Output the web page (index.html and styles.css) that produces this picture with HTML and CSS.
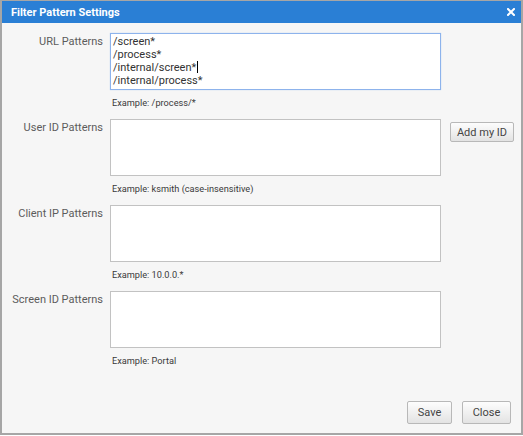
FILE: index.html
```html
<!DOCTYPE html>
<html>
<head>
<meta charset="utf-8">
<link rel="stylesheet" href="styles.css">
</head>
<body>
<div class="dialog">
  <div class="titlebar">
    <span class="title">Filter Pattern Settings</span>
    <svg class="close-x" width="8" height="8" viewBox="0 0 8 8"><path d="M1 1L7 7M7 1L1 7" stroke="#fff" stroke-width="2" stroke-linecap="square"/></svg>
  </div>
  <div class="content">
    <div class="row">
      <div class="label">URL Patterns</div>
      <div class="field">
        <div class="area focused">/screen*<br>/process*<br>/internal/screen*<span class="caret"></span><br>/internal/process*</div>
        <div class="hint">Example: /process/*</div>
      </div>
    </div>
    <div class="row">
      <div class="label">User ID Patterns</div>
      <div class="field">
        <div class="area"></div>
        <div class="hint">Example: ksmith (case-insensitive)</div>
      </div>
      <button class="btn btn-side">Add my ID</button>
    </div>
    <div class="row">
      <div class="label">Client IP Patterns</div>
      <div class="field">
        <div class="area"></div>
        <div class="hint">Example: 10.0.0.*</div>
      </div>
    </div>
    <div class="row">
      <div class="label">Screen ID Patterns</div>
      <div class="field">
        <div class="area"></div>
        <div class="hint">Example: Portal</div>
      </div>
    </div>
  </div>
  <div class="footer">
    <button class="btn btn-foot btn-save">Save</button>
    <button class="btn btn-foot btn-close">Close</button>
  </div>
</div>
</body>
</html>
```

FILE: styles.css
```css
html, body {
  margin: 0;
  padding: 0;
  background: #ffffff;
}
body {
  font-family: Roboto, "Liberation Sans", Arial, sans-serif;
}
.dialog {
  width: 523px;
  height: 435px;
  box-sizing: border-box;
  border: 2px solid #a6a6a6;
  border-top-width: 1px;
  background: #f6f6f6;
  display: flex;
  flex-direction: column;
}
.titlebar {
  height: 22px;
  background: #2a7fd5;
  display: flex;
  align-items: center;
  justify-content: space-between;
  padding: 0 6px 0 9px;
  flex: none;
}
.title {
  color: #ffffff;
  font-weight: 700;
  font-size: 11px;
  line-height: 13px;
}
.close-x {
  display: block;
}
.content {
  padding-top: 10px;
  flex: 1;
}
.row {
  display: flex;
  align-items: flex-start;
  height: 86px;
}
.label {
  width: 101px;
  text-align: right;
  font-size: 11px;
  line-height: 13px;
  color: #5c5c5c;
  padding-top: 2px;
  flex: none;
}
.field {
  margin-left: 7px;
  width: 331px;
  flex: none;
}
.area {
  box-sizing: border-box;
  height: 57px;
  background: #ffffff;
  border: 1px solid #c2c2c2;
  padding: 2px 2px;
  font-size: 11px;
  line-height: 12.65px;
  color: #333333;
}
.area.focused {
  border-color: #8db3ec;
  box-shadow: 0 0 1px 0 #b4cdf3;
}
.caret {
  display: inline-block;
  width: 1px;
  height: 12px;
  background: #000000;
  vertical-align: -2px;
  margin-left: 1px;
}
.hint {
  margin-top: 7px;
  padding-left: 2px;
  font-size: 9.2px;
  line-height: 11px;
  color: #3a3a3a;
}
.btn {
  font-family: Roboto, "Liberation Sans", Arial, sans-serif;
  font-size: 11px;
  color: #444444;
  background: linear-gradient(#fdfdfd, #e3e3e3);
  border: 1px solid #b8b8b8;
  border-radius: 2px;
  padding: 0;
  box-sizing: border-box;
}
.btn-side {
  margin-left: 9px;
  margin-top: 3px;
  width: 64px;
  height: 20px;
}
.footer {
  display: flex;
  justify-content: flex-end;
  gap: 10px;
  padding: 0 10px 9px 0;
  flex: none;
}
.btn-foot {
  height: 23px;
}
.btn-save {
  width: 45px;
}
.btn-close {
  width: 49px;
}
```
